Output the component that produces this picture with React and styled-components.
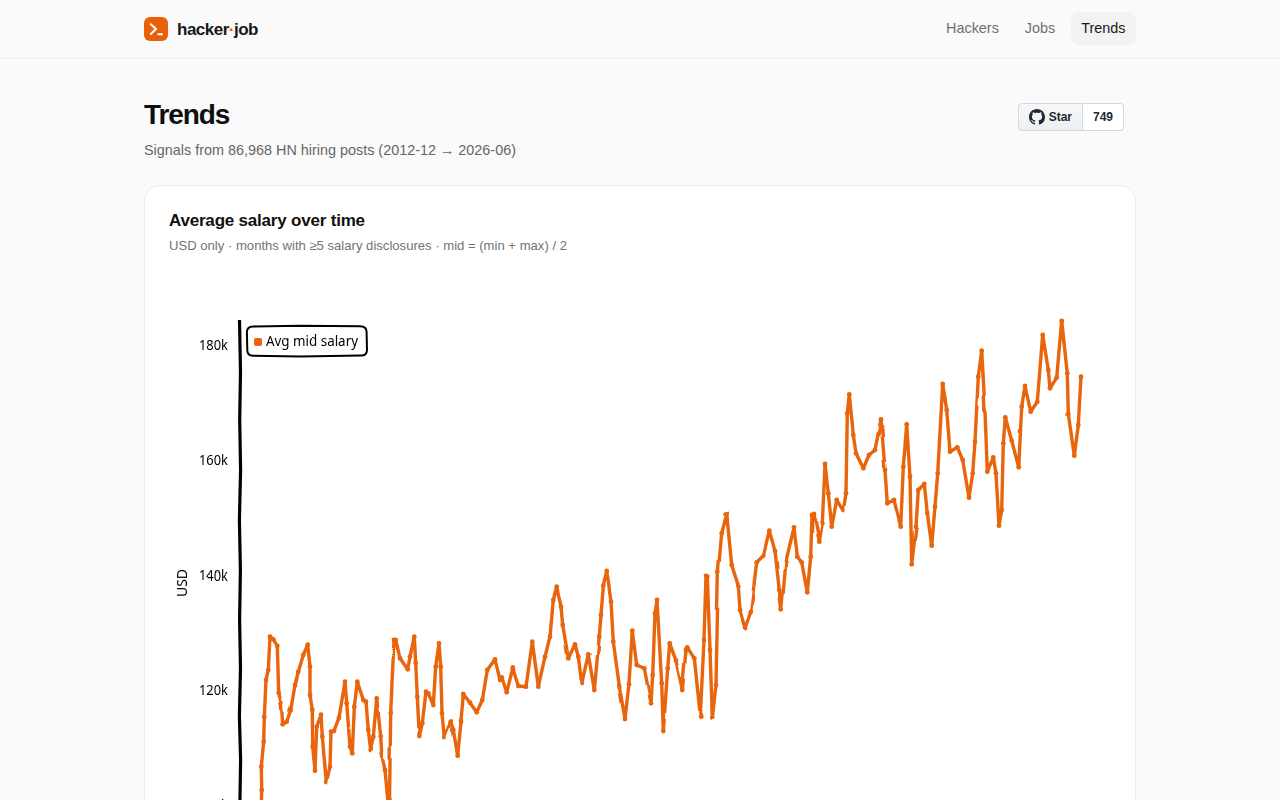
import styled, { createGlobalStyle } from 'styled-components';
import { BsGithub } from 'react-icons/bs';

const salaryPoints = [
  [261, 815], [261.7, 790], [261.3, 766.7], [263.7, 741.7], [264.3, 716.7], [266, 680], [268.3, 670], [270, 636.7], [273.3, 639.3], [277.3, 646],
  [278.7, 693], [281.3, 703], [282.7, 724.3], [286.7, 721.7], [290.7, 710], [295, 685], [298.3, 671.7], [303.3, 655], [307.7, 644.7],
  [310, 666.7], [310, 695], [312.3, 710], [312.7, 746.7], [315, 770.7], [316.7, 726.7], [321, 714.7], [322.3, 736.7], [326.3, 782],
  [330, 766.7], [331, 731.7], [334, 731], [339, 717.7], [345, 681.7], [346.7, 703.3], [350, 746.7], [352.3, 753.3], [354.3, 706.7],
  [357.3, 681.7], [363.3, 700], [366, 701.7], [368.3, 730], [370.7, 750], [373.3, 736.7], [376.7, 698.3], [380.7, 736.7], [381.7, 755],
  [385, 770], [388.3, 805], [389.5, 800], [390.7, 713], [394, 640], [395.7, 640], [400, 658.3], [407.7, 669.3], [410, 656.7], [414.3, 636.7],
  [415.7, 663], [417.3, 696.7], [419.3, 736], [422.3, 723.3], [426, 691.7], [428.3, 693.3], [433.3, 705], [435.7, 666.7], [439, 643.3],
  [440.7, 666.7], [442, 713.3], [444.3, 737.3], [450.7, 721.7], [453.3, 730], [457.7, 755.7], [461, 721.7], [463.3, 694], [470, 702.7],
  [476.7, 712.3], [482.3, 700], [487.3, 670], [495, 659.3], [500, 680], [501.7, 677.3], [506.7, 692.3], [512.7, 668.3], [518.3, 686],
  [526, 686.7], [532.3, 641.7], [538.3, 686.7], [545, 656.7], [550, 636.7], [553.3, 600], [556.7, 587.7], [561, 606.7], [562.7, 625],
  [568.3, 658.3], [575, 644.3], [578.3, 656.7], [581.7, 683.3], [588.3, 654.3], [594.3, 690], [599.3, 636.7], [601, 615], [603.3, 586.7],
  [606.7, 571], [611, 601.7], [613.3, 641.7], [619.3, 686], [625, 719], [629, 683.3], [632.3, 630.7], [636.7, 665], [644.3, 668.3],
  [651, 703.3], [652.7, 675], [655, 613.3], [657, 600], [661.7, 683.3], [663.3, 731], [667.7, 668.3], [669.7, 643.3], [676, 660.7],
  [682.3, 690], [686, 650], [687.3, 647.3], [694.3, 658.3], [700.3, 715.7], [704, 640], [706, 576], [707.3, 576.7], [710, 650],
  [712.3, 716.7], [716, 685], [718.3, 571.7], [721.7, 533.3], [726.7, 514.3], [731.7, 565], [738.3, 585.7], [740, 610], [745, 627.3],
  [750.7, 611], [756.7, 562.3], [763.3, 555.7], [769.3, 530.7], [775, 551], [779.3, 590], [781.7, 609.3], [786, 561], [794, 527.3],
  [797.3, 556.7], [801.7, 562.3], [807.3, 592.3], [810.7, 556.7], [812, 515], [814, 514], [819.3, 541.7], [822.3, 523.3], [825, 464],
  [828.3, 493.3], [831.7, 526.7], [836.7, 500], [843.3, 511], [846, 493.3], [847.3, 413.3], [849.3, 394.3], [853.3, 435], [856, 453.3],
  [863.3, 468.3], [869, 455], [875, 450], [881, 419.3], [885, 470], [887.3, 503.3], [894, 500], [900.7, 526.7], [903.3, 466.7],
  [906.7, 424.3], [910, 476.7], [911.7, 564.3], [916, 526.7], [918.3, 490], [924.3, 484], [927.3, 513.3], [931.7, 545.7], [935, 506.7],
  [937.7, 473.3], [942.7, 384], [946.7, 410], [950, 451.7], [957.3, 447.3], [962.7, 460], [969, 497.7], [972.7, 473.3], [975, 441.7],
  [978.3, 376.7], [981.7, 350.7], [985, 410], [987.3, 471.7], [993.3, 457.3], [996, 473.3], [999, 525.7], [1001.7, 510], [1003.3, 443.3],
  [1005.3, 417.3], [1011.7, 440.7], [1018.7, 467.3], [1021.7, 406.7], [1025, 386], [1030.7, 411.7], [1037.3, 401.7], [1042.7, 335],
  [1048.3, 370], [1050, 388.3], [1056.7, 377.7], [1061.7, 321], [1067.3, 373.3], [1068.3, 414], [1074.3, 455.7], [1078.3, 425], [1081, 375.7],
];

const yTicks = [
  { label: '180k', y: 350 },
  { label: '160k', y: 465 },
  { label: '140k', y: 580 },
  { label: '120k', y: 695 },
  { label: '100k', y: 810 },
];

const GlobalStyle = createGlobalStyle`
  html, body {
    margin: 0;
    background: #fafafa;
    color: #111;
    font-family: "Liberation Sans", Arial, sans-serif;
  }
`;

const Header = styled.header`
  height: 58px;
  border-bottom: 1px solid #ececec;
`;

const HeaderInner = styled.div`
  width: 992px;
  height: 100%;
  margin: 0 auto;
  display: flex;
  align-items: center;
  justify-content: space-between;
`;

const Brand = styled.a`
  display: flex;
  align-items: center;
  gap: 9px;
  font-size: 17px;
  font-weight: 700;
  letter-spacing: -0.5px;
  color: #18181b;
`;

const BrandName = styled.span`
  padding-top: 2px;
`;

const BrandDot = styled.span`
  color: #ea5f0a;
`;

const LogoMark = styled.svg`
  width: 24px;
  height: 24px;
  display: block;
`;

const Nav = styled.nav`
  display: flex;
  gap: 5px;
  margin-top: -1px;
`;

const NavLink = styled.a`
  padding: 8px 10.5px 9px;
  border-radius: 8px;
  font-size: 14.4px;
  line-height: 16px;
  color: ${(p) => (p.$active ? '#18181b' : '#6f6f6f')};
  background: ${(p) => (p.$active ? '#f2f2f2' : 'transparent')};
`;

const Main = styled.main`
  width: 992px;
  margin: 0 auto;
  padding-top: 40px;
`;

const TitleRow = styled.div`
  display: flex;
  justify-content: space-between;
  align-items: flex-start;
`;

const Title = styled.h1`
  margin: 0;
  font-size: 28px;
  line-height: 32px;
  font-weight: 700;
  letter-spacing: -1.1px;
  color: #0f0f10;
`;

const Subtitle = styled.p`
  margin: 10px 0 0;
  font-size: 14.4px;
  line-height: 18px;
  color: #666;
`;

const StarWidget = styled.div`
  display: flex;
  height: 28px;
  margin: 4px 12px 0 0;
  font-size: 12px;
  font-weight: 700;
  color: #24292f;
`;

const StarButton = styled.a`
  display: flex;
  align-items: center;
  gap: 4px;
  padding: 0 10px;
  border: 1px solid #d5d9dd;
  border-radius: 4px 0 0 4px;
  background: linear-gradient(#f6f8fa, #ebf0f4);
`;

const StarCount = styled.a`
  display: flex;
  align-items: center;
  padding: 0 10px;
  border: 1px solid #d5d9dd;
  border-left: 0;
  border-radius: 0 4px 4px 0;
  background: #fff;
`;

const Card = styled.section`
  margin-top: 26px;
  padding: 25px 24px 20px;
  background: #fff;
  border: 1px solid #ececec;
  border-radius: 16px;
`;

const CardTitle = styled.h2`
  margin: 0;
  font-size: 17px;
  line-height: 20px;
  font-weight: 700;
  letter-spacing: -0.2px;
  color: #111;
`;

const CardSubtitle = styled.p`
  margin: 7px 0 0;
  font-size: 13.1px;
  line-height: 16px;
  color: #737373;
`;

const Chart = styled.svg`
  display: block;
  width: 943px;
  height: 660px;
  margin-top: 12px;
`;

const ChartText = styled.text`
  font-family: "Noto Sans", sans-serif;
  font-size: 14px;
  fill: #000;
`;

function SalaryChart() {
  const line = salaryPoints.map((p) => p.join(',')).join(' ');
  return (
    <Chart viewBox="169 266 943 660">
      <defs>
        <filter id="rough" filterUnits="userSpaceOnUse" x="169" y="266" width="943" height="660">
          <feTurbulence type="fractalNoise" baseFrequency="0.03" numOctaves="1" seed="3" result="noise" />
          <feDisplacementMap in="SourceGraphic" in2="noise" scale="2.5" xChannelSelector="R" yChannelSelector="G" />
        </filter>
      </defs>
      <path
        d="M239.5 320 L240.5 372 L239.7 420 L240.6 470 L239.4 520 L240.4 570 L239.6 620 L240.5 668 L239.4 716 L240.6 760 L239.8 810 L240.3 910"
        fill="none"
        stroke="#000"
        strokeWidth="3.2"
      />
      <path
        d="M253 326.6 L300 325.7 L360 326.3 Q366.6 326.4 366.6 332 L367 350 Q366.8 355.7 361 355.6 L300 356.4 L253 355.8 Q247.2 355.7 247.3 350 L246.9 332 Q247 326.7 253 326.6 Z"
        fill="#fff"
        stroke="#000"
        strokeWidth="2"
      />
      <g filter="url(#rough)">
        <rect x="254" y="338" width="8" height="8" rx="2" fill="#ea6508" />
        <ChartText x="266" y="346" textLength="92" lengthAdjust="spacingAndGlyphs">Avg mid salary</ChartText>
        {yTicks.map((tick) => (
          <ChartText key={tick.label} x="228" y={tick.y} textAnchor="end" textLength="29" lengthAdjust="spacingAndGlyphs">{tick.label}</ChartText>
        ))}
        <ChartText x="-583" y="187" textAnchor="middle" transform="rotate(-90)">USD</ChartText>
        <polyline points={line} fill="none" stroke="#e8650a" strokeWidth="3.4" strokeLinejoin="round" strokeLinecap="round" />
        {salaryPoints.map(([x, y]) => (
          <circle key={`${x}-${y}`} cx={x} cy={y} r="2.4" fill="#e8650a" />
        ))}
      </g>
    </Chart>
  );
}

export default function App() {
  return (
    <>
      <GlobalStyle />
      <Header>
        <HeaderInner>
          <Brand>
            <LogoMark viewBox="0 0 24 24">
              <rect width="24" height="24" rx="6" fill="#ea5f0a" />
              <path d="M6.8 7.2 L12 12 L6.8 17" fill="none" stroke="#fff" strokeWidth="2" strokeLinecap="round" strokeLinejoin="round" />
              <path d="M14.2 17.2 H18" fill="none" stroke="#fff" strokeWidth="2" strokeLinecap="round" />
            </LogoMark>
            <BrandName>hacker<BrandDot>·</BrandDot>job</BrandName>
          </Brand>
          <Nav>
            <NavLink>Hackers</NavLink>
            <NavLink>Jobs</NavLink>
            <NavLink $active>Trends</NavLink>
          </Nav>
        </HeaderInner>
      </Header>
      <Main>
        <TitleRow>
          <div>
            <Title>Trends</Title>
            <Subtitle>Signals from 86,968 HN hiring posts (2012-12 → 2026-06)</Subtitle>
          </div>
          <StarWidget>
            <StarButton><BsGithub size={16} />Star</StarButton>
            <StarCount>749</StarCount>
          </StarWidget>
        </TitleRow>
        <Card>
          <CardTitle>Average salary over time</CardTitle>
          <CardSubtitle>USD only · months with ≥5 salary disclosures · mid = (min + max) / 2</CardSubtitle>
          <SalaryChart />
        </Card>
      </Main>
    </>
  );
}
